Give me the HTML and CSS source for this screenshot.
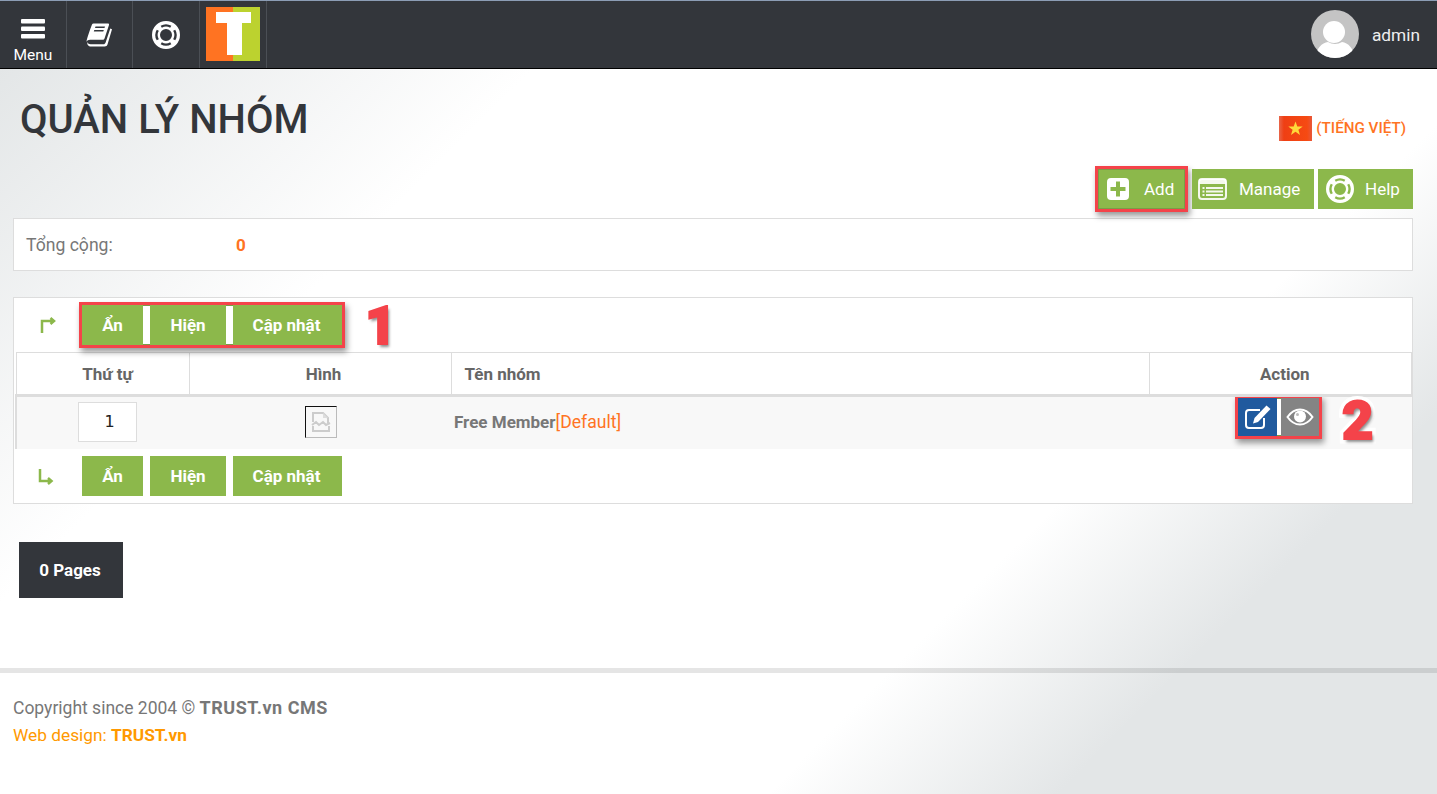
FILE: index.html
```html
<!DOCTYPE html>
<html lang="vi">
<head>
  <meta charset="UTF-8" />
  <title>Quản lý nhóm</title>
  <link rel="stylesheet" href="styles.css">
</head>
<body>
  <!-- Top bar -->
  <header class="topbar">
    <a class="top-item menu-item">
      <svg class="bars" width="24" height="20" viewBox="0 0 24 20"><rect y="0" width="24" height="4.500" rx="1"/><rect y="7.500" width="24" height="4.500" rx="1"/><rect y="15" width="24" height="4.500" rx="1"/></svg>
      <span>Menu</span>
    </a>
    <a class="top-item">
      <svg width="27" height="24" viewBox="0 0 27 24"><path fill="#fff" fill-rule="evenodd" d="M7.500.5h14.500c.8 0 1.200.6 1 1.400l-4.500 13.600c-.3.900-.9 1.200-1.800 1.200H4c-1.600 0-2.900.8-3.500 2C.6 16.500 3.500 8 6 1.500c.3-.7.8-1 1.500-1zM9.500 3.500l-.5 1.500h9.500l.5-1.500zM8.300 7l-.5 1.500h9.500l.5-1.500z"/><path fill="#fff" d="M1.500 19c.3 1.500 1.500 2.200 3 2.200h13c1 0 1.600-.6 2-1.500l4.800-14.200 1.700.8-4.500 15.200c-.4 1.300-1.300 2-2.800 2H5c-2.500 0-4.200-1.700-3.500-4.500z"/></svg>
    </a>
    <a class="top-item">
      <svg width="28" height="28" viewBox="0 0 28 28"><use href="#buoy"/></svg>
    </a>
    <a class="top-item logo-item">
      <svg width="54" height="54" viewBox="0 0 54 54"><rect width="27" height="54" fill="#ff7322"/><rect x="27" width="27" height="54" fill="#bcd22f"/><path fill="#fff" d="M10 5h35v11H36v32H21V16H10z"/></svg>
    </a>
    <div class="user">
      <svg width="48" height="48" viewBox="0 0 48 48"><circle cx="24" cy="24" r="24" fill="#c4c4c4"/><clipPath id="avatar"><circle cx="24" cy="24" r="24"/></clipPath><g clip-path="url(#avatar)" fill="#fff"><circle cx="23" cy="22" r="11"/><path d="M5 48c0-10 6-15 12-16 4 2.500 10 2.500 14 0 6 1 12 6 12 16z"/></g></svg>
      <span>admin</span>
    </div>
  </header>

  <svg class="defs" width="0" height="0">
    <symbol id="buoy" viewBox="0 0 28 28">
      <path fill="#fff" fill-rule="evenodd" d="M14 0a14 14 0 1 0 0 28 14 14 0 0 0 0-28zm0 8a6 6 0 1 1 0 12 6 6 0 0 1 0-12z"/>
      <path stroke="currentColor" stroke-width="2.400" fill="none" d="M9.250 5.770A9.500 9.500 0 0 1 18.750 5.770M9.250 22.230A9.500 9.500 0 0 0 18.750 22.230M5.770 9.250A9.500 9.500 0 0 0 5.770 18.750M22.230 9.250A9.500 9.500 0 0 1 22.230 18.750"/>
    </symbol>
    <linearGradient id="flag-red" x1="0" y1="0" x2="1" y2="0">
      <stop offset="0" stop-color="#e8664a"/>
      <stop offset="0.15" stop-color="#ef3f14"/>
      <stop offset="0.85" stop-color="#f64a12"/>
      <stop offset="1" stop-color="#e8583a"/>
    </linearGradient>
  </svg>

  <main class="main">
    <div class="head">
      <h1>QUẢN LÝ NHÓM</h1>
      <div class="lang">
        <svg width="33" height="25" viewBox="0 0 33 25"><rect width="33" height="25" fill="url(#flag-red)"/><path fill="#ffd93a" d="M16.500 5.500l1.800 5h5.400l-4.300 3.200 1.600 5.300-4.500-3.200-4.500 3.200 1.600-5.300-4.300-3.200h5.400z"/></svg>
        <span>(TIẾNG VIỆT)</span>
      </div>
    </div>

    <div class="actions">
      <a class="btn-tool add marked">
        <svg width="22" height="22" viewBox="0 0 22 22"><path fill="#fff" fill-rule="evenodd" d="M4 0h14a4 4 0 0 1 4 4v14a4 4 0 0 1-4 4H4a4 4 0 0 1-4-4V4a4 4 0 0 1 4-4zm5 3.500V9H3.500v4H9v5.500h4V13h5.500V9H13V3.500z"/></svg>
        <span>Add</span>
      </a>
      <a class="btn-tool manage">
        <svg width="29" height="22" viewBox="0 0 29 22"><rect x="1" y="1" width="27" height="20" rx="3" fill="none" stroke="#fff" stroke-width="2" opacity="0.9"/><path fill="#fff" opacity="0.9" d="M1 1h27v5H1zM4.500 9h2v2h-2zM8 9h17v2H8zM4.500 12.500h2v2h-2zM8 12.500h17v2H8zM4.500 16h2v2h-2zM8 16h17v2H8z"/></svg>
        <span>Manage</span>
      </a>
      <a class="btn-tool help">
        <svg class="buoy-green" width="28" height="28" viewBox="0 0 28 28"><use href="#buoy"/></svg>
        <span>Help</span>
      </a>
    </div>

    <div class="total">
      <span class="total-label">Tổng cộng:</span>
      <span class="total-num">0</span>
    </div>

    <section class="grid">
      <div class="toolbar">
        <svg class="arrow" width="18" height="17" viewBox="0 0 18 17"><path d="M3 16V4h11M11.500 1l3.500 3-3.500 3" fill="none" stroke="#8cb84b" stroke-width="2.500"/></svg>
        <div class="btn-group marked">
          <button class="btn">Ẩn</button>
          <button class="btn btn-md">Hiện</button>
          <button class="btn btn-lg">Cập nhật</button>
        </div>
      </div>

      <table class="list">
        <thead>
          <tr>
            <th class="col-order">Thứ tự</th>
            <th class="col-img">Hình</th>
            <th class="col-name">Tên nhóm</th>
            <th class="col-action">Action</th>
          </tr>
        </thead>
        <tbody>
          <tr>
            <td class="cell-order"><input class="order-input" type="text" value="1"></td>
            <td class="cell-img">
              <span class="broken-img">
                <svg width="20" height="22" viewBox="0 0 20 22"><path fill="none" stroke="#ccc" stroke-width="2" d="M2 11V2h10l5 5v5M2 15v5h16v-5"/><path fill="none" stroke="#ccc" stroke-width="2" d="M1 14l4-3 3 3 4-3 3 3 4-2"/><path fill="#ddd" d="M12 2v5h5z"/></svg>
              </span>
            </td>
            <td class="cell-name"><b>Free Member</b><span class="tag">[Default]</span></td>
            <td class="cell-action">
              <div class="row-actions marked">
                <a class="act act-edit">
                  <svg width="28" height="26" viewBox="0 0 28 26"><path fill="none" stroke="#fff" stroke-width="2" d="M20 14v7a3 3 0 0 1-3 3H5a3 3 0 0 1-3-3V9a3 3 0 0 1 3-3h11"/><path fill="#fff" d="M22.500 1.500l4 3.500L14 18l-5 1.500L10.500 14z"/></svg>
                </a>
                <a class="act act-view">
                  <svg width="28" height="18" viewBox="0 0 28 18"><path fill="none" stroke="#fff" stroke-width="2" d="M1.500 9C5 4 9 1.500 14 1.500S23 4 26.500 9C23 14 19 16.500 14 16.500S5 14 1.500 9z"/><circle cx="14" cy="8.500" r="6" fill="#fff"/><circle cx="11.500" cy="6.500" r="1.500" fill="#bbb"/></svg>
                </a>
              </div>
            </td>
          </tr>
        </tbody>
      </table>

      <div class="toolbar toolbar-bottom">
        <svg class="arrow" width="18" height="17" viewBox="0 0 18 17"><path d="M3 1v12h11M11 10l3.500 3-3.500 3" fill="none" stroke="#8cb84b" stroke-width="2.500"/></svg>
        <div class="btn-group">
          <button class="btn">Ẩn</button>
          <button class="btn btn-md">Hiện</button>
          <button class="btn btn-lg">Cập nhật</button>
        </div>
      </div>

      <span class="callout callout-one" data-n="1">1</span>
      <span class="callout callout-two" data-n="2">2</span>
    </section>

    <div class="pager">0 Pages</div>
  </main>

  <footer class="footer">
    <p>Copyright since 2004 © <b>TRUST.vn CMS</b></p>
    <p class="design">Web design: <b>TRUST.vn</b></p>
  </footer>
</body>
</html>
```

FILE: styles.css
```css
* {
  box-sizing: border-box;
  margin: 0;
  padding: 0;
}

html, body {
  height: 100%;
}

body {
  font-family: 'Roboto', sans-serif;
  font-size: 16px;
  color: #777;
  background: linear-gradient(135deg, #e3e6e7 3%, #fff 27%, #fff 70%, #e3e6e7 83%);
  overflow: hidden;
}

.defs {
  position: absolute;
}

/* Top bar */
.topbar {
  display: flex;
  height: 69px;
  background: #33363b;
  border-top: 1px solid #8c9db5;
  border-bottom: 1px solid #000;
  color: #33363b;
}

.top-item {
  display: flex;
  flex-direction: column;
  align-items: center;
  justify-content: center;
  width: 66.670px;
  border-right: 1px solid #4b4f55;
  color: #33363b;
}

.menu-item {
  padding-top: 15px;
  color: #fff;
  font-size: 15.500px;
  line-height: 20px;
  gap: 6px;
}

.bars {
  fill: #fff;
}

.logo-item svg {
  margin: 0 0 2px 1px;
}

.user {
  display: flex;
  align-items: center;
  gap: 13px;
  margin-left: auto;
  padding: 0 17px 1px 0;
  color: #eee;
  font-size: 17.300px;
}

.user span {
  padding-top: 2px;
}

/* Page head */
.main {
  padding: 0 24px 70px 13px;
}

.head {
  display: flex;
  justify-content: space-between;
  height: 100px;
}

.head h1 {
  margin: 27px 0 0 7px;
  font-size: 40px;
  line-height: 48px;
  font-weight: 500;
  color: #33363b;
}

.lang {
  display: flex;
  align-items: center;
  gap: 4px;
  height: 25px;
  margin: 47px 7px 0 0;
  font-size: 15.200px;
  font-weight: 500;
  color: #ff7322;
}

.lang span {
  padding-bottom: 2px;
}

.actions {
  display: flex;
  justify-content: flex-end;
  gap: 4px;
}

.btn-tool {
  display: flex;
  align-items: center;
  height: 40px;
  background: #8cb84b;
  color: #fff;
  font-size: 17px;
}

.add {
  width: 87px;
  margin-right: 3px;
  padding-left: 9px;
  gap: 15px;
}

.manage {
  width: 122px;
  padding-left: 6px;
  gap: 12px;
}

.help {
  width: 95px;
  padding-left: 8px;
  gap: 11px;
}

.buoy-green {
  color: #8cb84b;
}

.marked {
  box-shadow: inset 0 0 0 1px #7a9c48, 0 0 0 3px #f4434a, 2px 4px 6px 3px rgba(0, 0, 0, 0.4);
}

/* Total box */
.total {
  display: flex;
  align-items: center;
  height: 53px;
  margin-top: 9px;
  padding-left: 12px;
  background: #fff;
  border: 1px solid #ddd;
  font-size: 17.600px;
}

.total-label {
  width: 210px;
}

.total-num {
  font-size: 17px;
  font-weight: 700;
  color: #ff7322;
}

/* List */
.grid {
  position: relative;
  height: 207px;
  margin-top: 26px;
  background: #fff;
  border: 1px solid #ddd;
}

.toolbar {
  display: flex;
  align-items: center;
  height: 54px;
  padding-left: 25px;
}

.arrow {
  margin-right: 25px;
}

.btn-group {
  display: flex;
  gap: 7px;
  background: #fff;
}

.btn {
  width: 61px;
  height: 40px;
  border: none;
  background: #8cb84b;
  color: #fff;
  font-family: inherit;
  font-size: 17px;
  font-weight: 700;
}

.btn-md {
  width: 76px;
}

.btn-lg {
  width: 109px;
  padding-right: 2px;
}

.list {
  width: 1397px;
  margin-left: 1px;
  border-collapse: collapse;
  table-layout: fixed;
}

.list th {
  height: 43px;
  border-top: 1px solid #ddd;
  border-left: 1px solid #ddd;
  border-right: 1px solid #ddd;
  border-bottom: 3px solid #ddd;
  font-size: 17px;
  font-weight: 700;
  color: #666;
}

.col-order {
  width: 173px;
  padding-left: 10px;
}

.col-img {
  width: 262px;
  padding-left: 7px;
}

.col-name {
  width: 698px;
  padding-left: 13px;
  text-align: left;
}

.col-action {
  padding-left: 9px;
}

.list td {
  height: 53px;
  padding-bottom: 2px;
  background: #f8f8f8;
  border-left: 2px solid #ddd;
}

.list td + td {
  border-left: none;
}

.cell-order {
  padding-left: 61px;
}

.order-input {
  display: block;
  width: 59px;
  height: 40px;
  border: 1px solid #ddd;
  background: #fff;
  padding-left: 4px;
  text-align: center;
  font-family: 'DejaVu Sans', sans-serif;
  font-size: 16px;
  color: #222;
}

.cell-img {
  padding-left: 2px;
  text-align: center;
}

.broken-img {
  display: inline-flex;
  align-items: center;
  justify-content: center;
  width: 32px;
  height: 32px;
  vertical-align: middle;
  border: 1px solid;
  border-color: #111 #bbb #bbb #111;
}

.cell-name {
  padding-left: 3px;
  font-size: 17px;
}

.tag {
  font-size: 17.600px;
  color: #ff7322;
}

.row-actions {
  display: flex;
  width: 81px;
  height: 38px;
  margin: 0 0 10px 89px;
  gap: 4px;
  background: #fff;
}

.act {
  display: flex;
  align-items: center;
  justify-content: center;
  width: 39px;
}

.act-edit {
  background: #205a9e;
}

.act-view {
  width: 38px;
  background: #848484;
}

.toolbar-bottom {
  height: 55px;
}

.toolbar-bottom .arrow {
  margin-left: -2px;
  margin-right: 27px;
}

/* Screenshot annotations */
.callout {
  position: absolute;
  font-family: 'Roboto', sans-serif;
  font-size: 54px;
  line-height: 52px;
  font-weight: 900;
  color: #f4434a;
  -webkit-text-stroke: 9px #fff;
  paint-order: stroke fill;
  text-shadow: 2px 3px 3px rgba(0, 0, 0, 0.45);
}

.callout::after {
  content: attr(data-n);
  position: absolute;
  left: 0;
  top: 0;
  -webkit-text-stroke: 2px #f4434a;
  text-shadow: none;
}

.callout-one {
  left: 351px;
  top: 2px;
}

.callout-two {
  left: 1328px;
  top: 97px;
}

.pager {
  width: 104px;
  height: 56px;
  margin: 38px 0 0 6px;
  padding-right: 2px;
  background: #33363b;
  color: #fff;
  font-size: 17px;
  font-weight: 700;
  line-height: 57px;
  text-align: center;
}

/* Footer */
.footer {
  padding: 21px 0 0 13px;
  border-top: 5px solid rgba(0, 0, 0, 0.1);
  font-size: 17.500px;
  line-height: 27px;
}

.footer p:first-child b {
  font-size: 18px;
  letter-spacing: 0.5px;
}

.design {
  font-size: 17.300px;
  color: #ff9900;
}
```
